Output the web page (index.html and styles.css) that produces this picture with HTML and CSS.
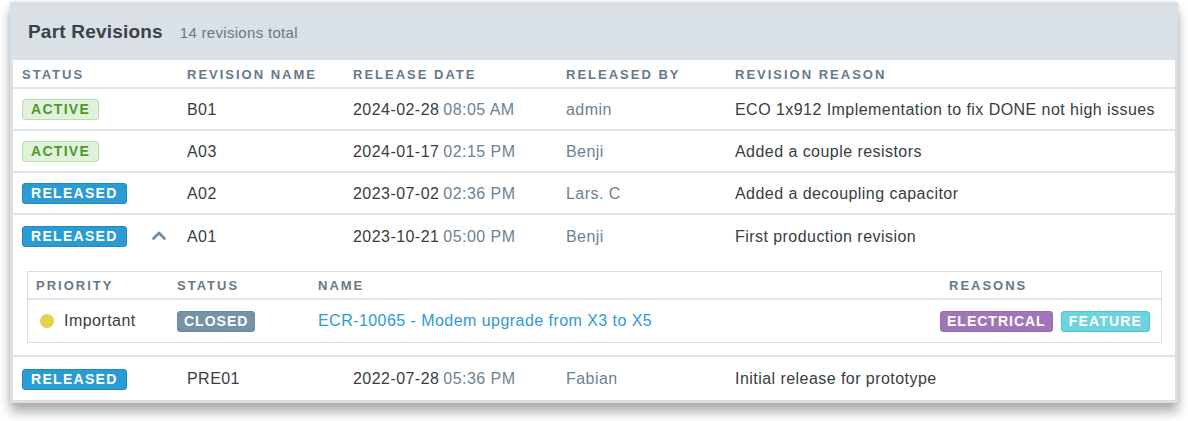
FILE: index.html
```html
<!DOCTYPE html>
<html>
<head>
<meta charset="utf-8">
<link rel="stylesheet" href="styles.css">
</head>
<body>
<div class="card">
  <div class="card-head">
    <h1 class="title">Part Revisions</h1>
    <span class="count">14 revisions total</span>
  </div>
  <div class="table">
    <div class="row row-head">
      <div class="cell">Status</div>
      <div class="cell">Revision Name</div>
      <div class="cell">Release Date</div>
      <div class="cell">Released By</div>
      <div class="cell">Revision Reason</div>
    </div>
    <div class="row">
      <div class="cell"><span class="badge badge-active">Active</span></div>
      <div class="cell">B01</div>
      <div class="cell">2024-02-28 <span class="muted">08:05 AM</span></div>
      <div class="cell muted">admin</div>
      <div class="cell">ECO 1x912 Implementation to fix DONE not high issues</div>
    </div>
    <div class="row">
      <div class="cell"><span class="badge badge-active">Active</span></div>
      <div class="cell">A03</div>
      <div class="cell">2024-01-17 <span class="muted">02:15 PM</span></div>
      <div class="cell muted">Benji</div>
      <div class="cell">Added a couple resistors</div>
    </div>
    <div class="row">
      <div class="cell"><span class="badge badge-released">Released</span></div>
      <div class="cell">A02</div>
      <div class="cell">2023-07-02 <span class="muted">02:36 PM</span></div>
      <div class="cell muted">Lars. C</div>
      <div class="cell">Added a decoupling capacitor</div>
    </div>
    <div class="row row-open">
      <div class="cell"><span class="badge badge-released">Released</span><svg class="chevron" width="14" height="9" viewBox="0 0 14 9"><path d="M1.5 7.5 L7 2 L12.5 7.5" fill="none" stroke="#6f8ba0" stroke-width="2.6" stroke-linecap="round" stroke-linejoin="round"/></svg></div>
      <div class="cell">A01</div>
      <div class="cell">2023-10-21 <span class="muted">05:00 PM</span></div>
      <div class="cell muted">Benji</div>
      <div class="cell">First production revision</div>
    </div>
    <div class="expand">
      <div class="sub">
        <div class="sub-row sub-head">
          <div class="sub-cell">Priority</div>
          <div class="sub-cell">Status</div>
          <div class="sub-cell">Name</div>
          <div class="sub-cell">Reasons</div>
        </div>
        <div class="sub-row sub-body">
          <div class="sub-cell"><span class="dot"></span>Important</div>
          <div class="sub-cell"><span class="badge badge-small badge-closed">Closed</span></div>
          <div class="sub-cell"><span class="link">ECR-10065 - Modem upgrade from X3 to X5</span></div>
          <div class="sub-cell reasons"><span class="badge badge-small badge-electrical">Electrical</span><span class="badge badge-small badge-feature">Feature</span></div>
        </div>
      </div>
    </div>
    <div class="row row-last">
      <div class="cell"><span class="badge badge-released">Released</span></div>
      <div class="cell">PRE01</div>
      <div class="cell">2022-07-28 <span class="muted">05:36 PM</span></div>
      <div class="cell muted">Fabian</div>
      <div class="cell">Initial release for prototype</div>
    </div>
  </div>
</div>
</body>
</html>
```

FILE: styles.css
```css
html, body {
  margin: 0;
  padding: 0;
  background: #ffffff;
}

body {
  font-family: "Liberation Sans", Arial, sans-serif;
  color: #383d42;
  min-height: 421px;
}

.card {
  width: 1168px;
  margin: 2px 0 0 10px;
  background: #d9e0e6;
  padding: 0 3px 3px;
  box-sizing: border-box;
  border-radius: 2px;
  box-shadow: 0 9px 12px rgba(0, 0, 0, 0.32), 0 0 4px rgba(0, 0, 0, 0.1);
}

.card-head {
  height: 58px;
  display: flex;
  align-items: center;
  padding-left: 15px;
  padding-top: 1px;
  box-sizing: border-box;
}

.title {
  margin: 0;
  font-size: 19px;
  font-weight: bold;
  letter-spacing: 0.2px;
  color: #3c4147;
}

.count {
  margin-left: 17px;
  font-size: 15px;
  letter-spacing: 0.3px;
  color: #6b7882;
  padding-top: 2px;
}

.table {
  background: #ffffff;
}

.row {
  display: grid;
  grid-template-columns: 165px 166px 213px 169px 1fr;
  height: 40px;
  align-items: center;
  border-bottom: 2px solid #dfe5ea;
  font-size: 16px;
  letter-spacing: 0.45px;
}

.row-head {
  height: 27px;
  font-size: 13px;
  font-weight: bold;
  text-transform: uppercase;
  letter-spacing: 2px;
  color: #66798a;
}

.row-open {
  height: 42px;
  border-bottom: none;
}

.row-last {
  height: 43px;
  border-bottom: none;
}

.cell {
  padding-left: 9px;
  padding-top: 1px;
  white-space: nowrap;
  display: flex;
  align-items: center;
}

.muted {
  color: #6c8294;
  margin-left: 4px;
}

.cell.muted {
  margin-left: 0;
}

.badge {
  display: inline-block;
  box-sizing: border-box;
  height: 21px;
  line-height: 19px;
  padding: 0 8px;
  border: 1px solid transparent;
  border-radius: 3px;
  font-size: 14px;
  font-weight: bold;
  letter-spacing: 1.3px;
  text-transform: uppercase;
}

.badge-small {
  padding: 0 6px;
  letter-spacing: 1px;
}

.badge-active {
  background: #e1f1da;
  border-color: #b9dcab;
  color: #4b9a30;
}

.badge-released {
  background: #2b9bd4;
  border-color: #2089c0;
  color: #ffffff;
}

.badge-closed {
  background: #7393a8;
  border-color: #6a899e;
  color: #ffffff;
}

.badge-electrical {
  background: #a175ba;
  border-color: #966aae;
  color: #ffffff;
}

.badge-feature {
  background: #6cd4e0;
  border-color: #55c0cc;
  color: #ffffff;
  margin-left: 8px;
  padding: 0 7px;
  letter-spacing: 1.2px;
}

.chevron {
  margin-left: 25px;
  margin-top: -2px;
}

.expand {
  padding: 14px 13px 12px 14px;
  border-bottom: 2px solid #dfe5ea;
}

.sub {
  border: 1px solid #d8e0e6;
}

.sub-row {
  display: grid;
  grid-template-columns: 141px 141px 630px 1fr;
  align-items: center;
}

.sub-head {
  height: 26px;
  border-bottom: 2px solid #dfe5ea;
  font-size: 13px;
  font-weight: bold;
  text-transform: uppercase;
  letter-spacing: 2px;
  color: #66798a;
}

.sub-body {
  height: 42px;
  font-size: 16px;
  letter-spacing: 0.45px;
}

.sub-cell {
  padding-left: 8px;
  display: flex;
  align-items: center;
  white-space: nowrap;
}

.sub-cell.reasons {
  padding-left: 0;
  padding-right: 12px;
  justify-content: flex-end;
}

.sub-head .sub-cell:last-child {
  padding-left: 9px;
}

.dot {
  width: 14px;
  height: 14px;
  border-radius: 50%;
  background: #e7d04c;
  margin: 0 10px 0 4px;
}

.link {
  color: #2e9ad2;
}
```
